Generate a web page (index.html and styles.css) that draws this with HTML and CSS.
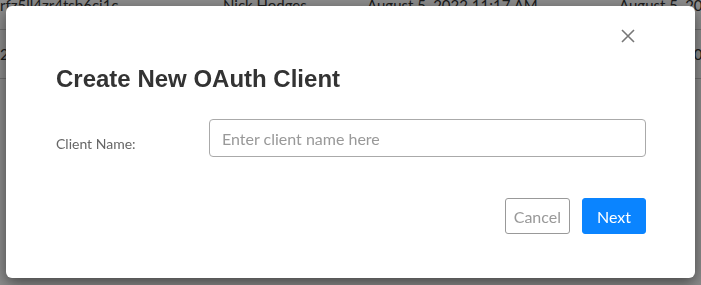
FILE: index.html
```html
<!DOCTYPE html>
<html lang="en">
<head>
  <meta charset="UTF-8">
  <meta name="viewport" content="width=device-width, initial-scale=1.0">
  <title>OAuth Clients</title>
  <link rel="stylesheet" href="styles.css">
</head>
<body>
  <table class="clients-table">
    <tbody>
      <tr>
        <td class="col-id">rfz5ll4zr4tsb6ci1c</td>
        <td class="col-owner">Nick Hodges</td>
        <td class="col-created">August 5, 2022 11:17 AM</td>
        <td class="col-updated">August 5, 2022 11:17 AM</td>
      </tr>
      <tr>
        <td class="col-id">2n4kq8vbw1xk0c7a3e</td>
        <td class="col-owner">Nick Hodges</td>
        <td class="col-created">August 5, 2022 11:20 AM</td>
        <td class="col-updated">August 5, 2022 11:20 AM</td>
      </tr>
    </tbody>
  </table>

  <div class="backdrop">
    <div class="modal">
      <div class="modal-header">
        <button class="close" aria-label="Close">
          <svg width="14" height="14" viewBox="0 0 14 14">
            <path d="M1 1L13 13M13 1L1 13" stroke="#777" stroke-width="1.6" fill="none"/>
          </svg>
        </button>
      </div>
      <h2 class="modal-title">Create New OAuth Client</h2>
      <div class="form-row">
        <label class="form-label" for="clientName">Client Name:</label>
        <input id="clientName" class="form-input" type="text" placeholder="Enter client name here">
      </div>
      <div class="modal-footer">
        <button class="btn btn-cancel">Cancel</button>
        <button class="btn btn-next">Next</button>
      </div>
    </div>
  </div>
</body>
</html>
```

FILE: styles.css
```css
body {
  margin: 0;
  font-family: Lato, "Open Sans", sans-serif;
  background-color: #fff;
  color: #333;
  overflow: hidden;
}

.clients-table {
  width: 900px;
  table-layout: fixed;
  border-collapse: collapse;
  margin-top: -19px;
  font-size: 15px;
}
.clients-table td {
  height: 48px;
  padding: 0;
  border-bottom: 1px solid #ccc;
  white-space: nowrap;
  overflow: hidden;
}
.col-id { width: 223px; }
.col-owner { width: 144px; }
.col-created { width: 252px; }

/* затемнення сторінки під вікном */
.backdrop {
  position: fixed;
  top: 0;
  left: 0;
  right: 0;
  bottom: 0;
  background-color: rgba(0, 0, 0, 0.45);
}

.modal {
  position: absolute;
  top: 6px;
  left: 6px;
  width: 689px;
  box-sizing: border-box;
  padding: 22px 49px 44px 50px;
  background-color: #fff;
  border-radius: 6px;
  box-shadow: 0 5px 15px rgba(0, 0, 0, 0.5);
}

.modal-header {
  display: flex;
  justify-content: flex-end;
  height: 16px;
}
.close {
  margin-right: 10px;
  padding: 1px;
  border: none;
  background: none;
  cursor: pointer;
  line-height: 0;
}

.modal-title {
  margin: 21px 0 0;
  font-family: "Liberation Sans", Arial, sans-serif;
  font-size: 24px;
  line-height: 28px;
  font-weight: bold;
  color: #333;
}

.form-row {
  display: flex;
  align-items: center;
  margin-top: 26px;
}
.form-label {
  width: 153px;
  flex-shrink: 0;
  padding-top: 10px;
  font-size: 14px;
  color: #666;
}
.form-input {
  flex: 1;
  height: 38px;
  box-sizing: border-box;
  padding: 0 12px;
  border: 1px solid #aaa;
  border-radius: 4px;
  font-family: Lato, sans-serif;
  font-size: 16px;
  color: #333;
}
.form-input::placeholder {
  color: #999;
}

.modal-footer {
  display: flex;
  justify-content: flex-end;
  gap: 12px;
  margin-top: 41px;
}
.btn {
  height: 36px;
  border-radius: 3px;
  font-family: Lato, sans-serif;
  font-size: 16px;
  cursor: pointer;
}
.btn-cancel {
  background-color: #fff;
  border: 1px solid #999;
  color: #999;
  padding: 0 8px;
}
.btn-next {
  background-color: #0a84ff;
  border: 1px solid #0a84ff;
  color: #fff;
  padding: 0 14px;
}
```
